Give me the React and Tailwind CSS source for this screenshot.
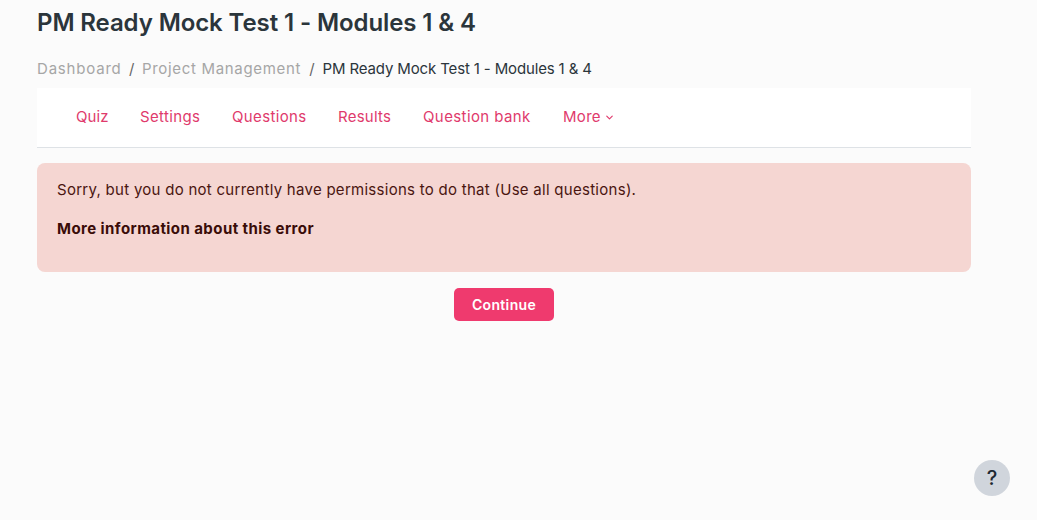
import React from 'react';
import { ChevronDown } from 'lucide-react';

const tabs = [
    { label: 'Quiz', width: 'w-[32px]', spacing: 'tracking-[0.1px]' },
    { label: 'Settings', width: 'w-[60px]', spacing: 'tracking-[0.35px]' },
    { label: 'Questions', width: 'w-[74px]', spacing: 'tracking-[0.35px]' },
    { label: 'Results', width: 'w-[53px]', spacing: 'tracking-[0.25px]' },
    { label: 'Question bank', width: 'w-[108px]', spacing: 'tracking-[0.4px]' },
];

const App = () => {
    return (
        <div className="relative h-[520px] w-[1037px] overflow-hidden bg-[#fbfbfb] font-['Inter',sans-serif]">
            <div className="ml-[37px] w-[934px]">
                <h1 className="h-[46px] text-[24px] leading-[46px] font-semibold tracking-[-0.1px] text-[#2b353b]">
                    PM Ready Mock Test 1 - Modules 1 &amp; 4
                </h1>

                <nav className="mt-[11px] flex h-[23px] items-center text-[15px] leading-[23px]">
                    <span className="tracking-[0.8px] text-[#a6a6a6]">Dashboard</span>
                    <span className="mx-[7.5px] text-[#666]">/</span>
                    <span className="tracking-[0.68px] text-[#a6a6a6]">Project Management</span>
                    <span className="mx-[8px] text-[#666]">/</span>
                    <span className="tracking-[-0.14px] text-[#2b353b]">PM Ready Mock Test 1 - Modules 1 &amp; 4</span>
                </nav>

                <div className="mt-[8px] flex h-[60px] items-center gap-[32px] border-b border-[#dee2e6] bg-white pl-[39px] text-[15px] text-[#e03a6c]">
                    {tabs.map((tab) => (
                        <a key={tab.label} className={`${tab.width} ${tab.spacing} whitespace-nowrap`}>{tab.label}</a>
                    ))}
                    <a className="flex items-center gap-[3px] tracking-[0.3px]">
                        More
                        <ChevronDown size={11} strokeWidth={2.5} />
                    </a>
                </div>

                <div className="mt-[15px] h-[109px] rounded-lg bg-[#f5d6d2] px-[20px] pt-[15px] text-[15px] text-[#4a1510]">
                    <p className="leading-[23px] tracking-[0.275px]">Sorry, but you do not currently have permissions to do that (Use all questions).</p>
                    <p className="mt-[16px] leading-[23px] font-bold tracking-[0.43px] text-[#3a0c08]">More information about this error</p>
                </div>

                <div className="mt-[16px] flex justify-center">
                    <button className="h-[33px] w-[100px] rounded-[5px] bg-[#ef3a6e] text-[14px] font-semibold tracking-[0.35px] text-white">
                        Continue
                    </button>
                </div>
            </div>

            <div className="absolute top-[460px] left-[974px] flex h-[36px] w-[36px] items-center justify-center rounded-full bg-[#d0d5dc] text-[20px] font-medium text-[#1f2933]">
                ?
            </div>
        </div>
    );
};

export default App;
